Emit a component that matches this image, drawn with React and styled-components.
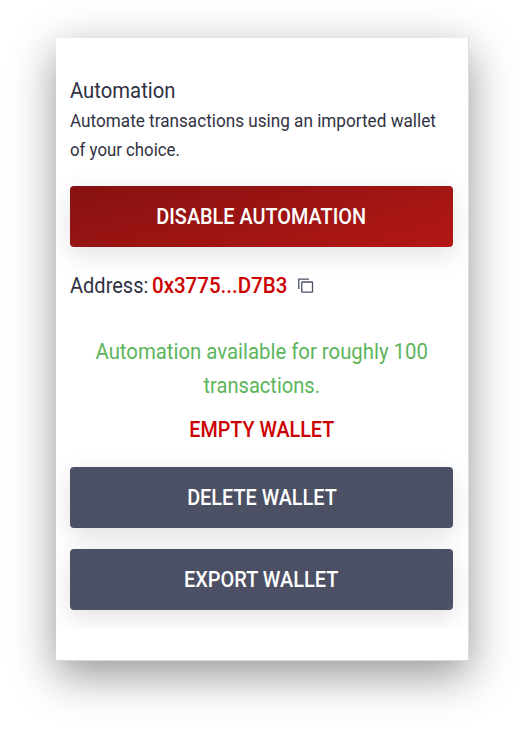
import React from "react";
import styled, { createGlobalStyle } from "styled-components";

const GlobalStyle = createGlobalStyle`
  * { box-sizing: border-box; }
  body {
    margin: 0;
    background: #fff;
    font-family: Roboto, "Open Sans", sans-serif;
    color: #303242;
  }
`;

const Page = styled.main`
  display: flow-root;
  width: 524px;
  height: 732px;
  overflow: hidden;
`;

const Card = styled.section`
  width: 413px;
  height: 623px;
  margin: 38px 0 0 56px;
  background: #fff;
  border-right: 1px solid #dedede;
  border-bottom: 1px solid #d8d8d8;
  box-shadow: 0 14px 42px rgba(0, 0, 0, 0.42);
`;

const Content = styled.div`
  height: 590px;
  padding: 38px 15px 0 14px;
  overflow: hidden;
`;

/* Condenses a line of type horizontally. */
const Condensed = styled.span`
  display: inline-block;
  white-space: nowrap;
  transform: scaleX(${(p) => p.$scale});
  transform-origin: ${(p) => (p.$centered ? "center" : "left")};
`;

const Title = styled.h1`
  margin: 0;
  font-size: 22px;
  font-weight: 400;
  line-height: 30px;
`;

const Description = styled.p`
  margin: 1px 0 21px;
  font-size: 18.5px;
  line-height: 29px;
  white-space: nowrap;
`;

const Button = styled.button`
  display: block;
  width: 383px;
  height: 61px;
  margin: 0 0 21px;
  padding: 1px 0 0;
  border: 0;
  border-radius: 4px;
  background: ${(p) =>
    p.$danger ? "linear-gradient(165deg, #861211, #b31715)" : "#4c5065"};
  box-shadow: 0 8px 26px rgba(0, 0, 0, 0.12);
  color: #fff;
  font: 500 22px/60px Roboto, sans-serif;
`;

const AddressRow = styled.div`
  display: flex;
  align-items: center;
  height: 36px;
  font-size: 22px;
  line-height: 36px;
`;

const Label = styled.span`
  width: 82px;
`;

const Address = styled.strong`
  width: 146px;
  color: #c00;
  font-weight: 500;
`;

const CopyIcon = styled.svg`
  width: 16px;
  height: 16px;
  fill: none;
  stroke: #4c5065;
  stroke-width: 1.3;
`;

const Notice = styled.p`
  margin: 31px 0 0;
  color: #5cb55c;
  font-size: 22px;
  line-height: 34px;
  text-align: center;
`;

const EmptyButton = styled.button`
  display: block;
  width: 100%;
  height: 36px;
  margin: 9px 0 19px;
  padding: 0;
  border: 0;
  background: none;
  color: #c00;
  font: 500 22px/36px Roboto, sans-serif;
`;

export default function App() {
  return (
    <>
      <GlobalStyle />
      <Page>
        <Card>
          <Content>
            <Title>
              <Condensed $scale={0.922}>Automation</Condensed>
            </Title>
            <Description>
              <Condensed $scale={0.927}>
                Automate transactions using an imported wallet
              </Condensed>
              <br />
              <Condensed $scale={0.907}>of your choice.</Condensed>
            </Description>
            <Button $danger>
              <Condensed $scale={0.903} $centered>DISABLE AUTOMATION</Condensed>
            </Button>
            <AddressRow>
              <Label>
                <Condensed $scale={0.91}>Address:</Condensed>
              </Label>
              <Address>
                <Condensed $scale={0.932}>0x3775...D7B3</Condensed>
              </Address>
              <CopyIcon viewBox="0 0 16 16" aria-label="Copy address">
                <path d="M0.8 11V1.2H11" />
                <rect x="3.8" y="4" width="10.7" height="10.2" rx="0.5" />
              </CopyIcon>
            </AddressRow>
            <Notice>
              <Condensed $scale={0.925} $centered>
                Automation available for roughly 100
              </Condensed>
              <br />
              <Condensed $scale={0.913} $centered>transactions.</Condensed>
            </Notice>
            <EmptyButton>
              <Condensed $scale={0.898} $centered>EMPTY WALLET</Condensed>
            </EmptyButton>
            <Button>
              <Condensed $scale={0.902} $centered>DELETE WALLET</Condensed>
            </Button>
            <Button>
              <Condensed $scale={0.907} $centered>EXPORT WALLET</Condensed>
            </Button>
          </Content>
        </Card>
      </Page>
    </>
  );
}
